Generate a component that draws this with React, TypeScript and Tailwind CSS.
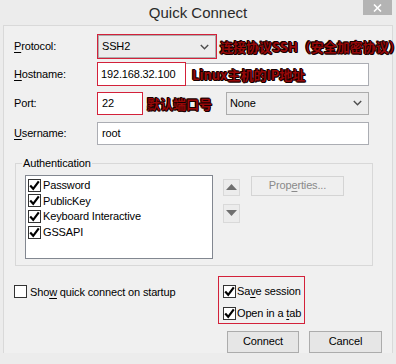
import React from "react";

const red = "border-[#d3213a]";
const note =
  "font-['Noto_Sans_CJK_SC',sans-serif] font-bold text-[13px] leading-none text-[#960808] [text-spacing-trim:space-all] [text-shadow:-1px_0_#150000,1px_0_#150000,0_-1px_#150000,0_1px_#150000,1px_1px_#150000,-1px_-1px_#150000] whitespace-nowrap shrink-0 tracking-normal";

function Check({ checked }: { checked?: boolean }) {
  return (
    <span className="w-[13px] h-[13px] border border-[#333] bg-white flex items-center justify-center shrink-0">
      {checked && (
        <svg width="11" height="11" viewBox="0 0 11 11">
          <path d="M1.2 5.6 L4.2 8.8 L9.8 1.4" stroke="#000" strokeWidth="2.2" fill="none" />
        </svg>
      )}
    </span>
  );
}

function Chevron() {
  return (
    <svg width="9" height="6" viewBox="0 0 9 6" className="mr-[6px]">
      <path d="M0.8 1 L4.5 4.8 L8.2 1" stroke="#4d4d4d" strokeWidth="1.4" fill="none" />
    </svg>
  );
}

function Label({ first, rest }: { first: string; rest: string }) {
  return (
    <span className="w-[83px] shrink-0">
      <u className="underline-offset-2">{first}</u>
      {rest}
    </span>
  );
}

export default function App() {
  const methods = ["Password", "PublicKey", "Keyboard Interactive", "GSSAPI"];
  return (
    <div className="w-[396px] h-[364px] overflow-hidden bg-[#ececec] flex flex-col text-[11px] tracking-[-0.15px] text-black font-['Liberation_Sans',Arial,sans-serif]">
      {/* title bar */}
      <div className="h-[25px] shrink-0 relative flex items-center justify-center tracking-normal">
        <span className="text-[15px] text-[#2a2a2a] mt-[2px]">Quick Connect</span>
        <div className="absolute right-[4px] top-0 w-[29px] h-[15px] bg-[#b4b4b4] flex items-center justify-center">
          <svg width="9" height="8" viewBox="0 0 9 8">
            <path d="M1 0.5 L8 7.5 M8 0.5 L1 7.5" stroke="#fff" strokeWidth="1.6" />
          </svg>
        </div>
      </div>

      <div className="mx-[3px] mb-[11px] flex-1 border-t border-x border-[#d9d9d9] bg-[#f0f0f0] pl-[10px] pr-[10px] pt-[8px]">
        {/* protocol */}
        <div className="h-[25px] -mr-[10px] flex items-center">
          <Label first="P" rest="rotocol:" />
          <div className={`w-[120px] h-[25px] shrink-0 border ${red}`}>
            <div className="h-full border border-[#acacac] bg-[#ececec] flex items-center justify-between pl-[3px]">
              <span>SSH2</span>
              <Chevron />
            </div>
          </div>
          <span className={`${note} ml-[3px]`}>连接协议SSH（安全加密协议）</span>
        </div>

        {/* hostname */}
        <div className="mt-[3px] h-[24px] flex items-center">
          <Label first="H" rest="ostname:" />
          <div className={`w-[89px] h-[24px] shrink-0 border ${red} bg-white flex items-center pl-[3px]`}>
            192.168.32.100
          </div>
          <div className="w-[183px] h-[23px] shrink-0 self-end border-y border-r border-[#abadb3] bg-white flex items-center pl-[6px]">
            <span className={note}>Linux主机的IP地址</span>
          </div>
        </div>

        {/* port */}
        <div className="mt-[5px] h-[24px] flex items-center">
          <Label first="" rest="Port:" />
          <div className="w-[129px] shrink-0 flex items-center">
            <div className={`w-[46px] h-[23px] shrink-0 border ${red} bg-white flex items-center pl-[4px]`}>22</div>
            <span className={`${note} ml-[4px]`}>默认端口号</span>
          </div>
          <div className="w-[143px] h-[23px] shrink-0 border border-[#acacac] bg-[#ececec] flex items-center justify-between pl-[3px]">
            <span>None</span>
            <Chevron />
          </div>
        </div>

        {/* username */}
        <div className="mt-[7px] h-[23px] flex items-center">
          <Label first="U" rest="sername:" />
          <div className="w-[272px] h-[23px] shrink-0 border border-[#abadb3] bg-white flex items-center pl-[4px]">root</div>
        </div>

        {/* authentication */}
        <fieldset className="mt-[10px] ml-[1px] w-[358px] border border-[#d8d8d8] pb-[6px]">
          <legend className="ml-[6px] px-[1px]">Authentication</legend>
          <div className="flex items-start pl-[9px] mt-[3px]">
            <div className="w-[188px] h-[84px] border border-[#828790] bg-white pt-[2px] pl-[2px]">
              {methods.map((m) => (
                <div key={m} className="h-[15.6px] flex items-center gap-[2px]">
                  <Check checked />
                  <span>{m}</span>
                </div>
              ))}
            </div>
            <div className="ml-[10px] flex flex-col">
              <div className="mt-[4px] w-[17px] h-[17px] border border-[#d9d9d9] bg-[#ececec] flex items-center justify-center">
                <svg width="11" height="6" viewBox="0 0 11 6">
                  <path d="M0 6 L5.5 0 L11 6 Z" fill="#707070" />
                </svg>
              </div>
              <div className="mt-[8px] w-[17px] h-[19px] border border-[#d9d9d9] bg-[#ececec] flex items-center justify-center">
                <svg width="11" height="6" viewBox="0 0 11 6">
                  <path d="M0 0 L5.5 6 L11 0 Z" fill="#707070" />
                </svg>
              </div>
            </div>
            <div className="ml-[11px] mt-[1px] w-[93px] h-[20px] border border-[#d4d4d4] bg-[#efefef] flex items-center justify-center text-[#8a8a8a]">
              <span>
                Prop<u className="underline-offset-2">e</u>rties...
              </span>
            </div>
          </div>
        </fieldset>

        {/* bottom */}
        <div className="mt-[10px] flex items-start">
          <div className="w-[204px] mt-[8px] flex items-center gap-[3px]">
            <Check />
            <span>
              Sho<u className="underline-offset-2">w</u> quick connect on startup
            </span>
          </div>
          <div className={`w-[87px] h-[48px] border ${red} pl-[4px] pt-[8px] flex flex-col gap-[9px]`}>
            <div className="h-[13px] flex items-center gap-[1px]">
              <Check checked />
              <span>
                Sa<u className="underline-offset-2">v</u>e session
              </span>
            </div>
            <div className="h-[13px] flex items-center gap-[1px]">
              <Check checked />
              <span>
                Open in a <u className="underline-offset-2">t</u>ab
              </span>
            </div>
          </div>
        </div>

        <div className="mt-[7px] flex justify-end gap-[10px]">
          <div className="w-[72px] h-[22px] border border-[#acacac] bg-[#e6e6e6] flex items-center justify-center">
            Connect
          </div>
          <div className="w-[73px] h-[22px] border border-[#acacac] bg-[#e6e6e6] flex items-center justify-center">
            Cancel
          </div>
        </div>
      </div>
    </div>
  );
}
